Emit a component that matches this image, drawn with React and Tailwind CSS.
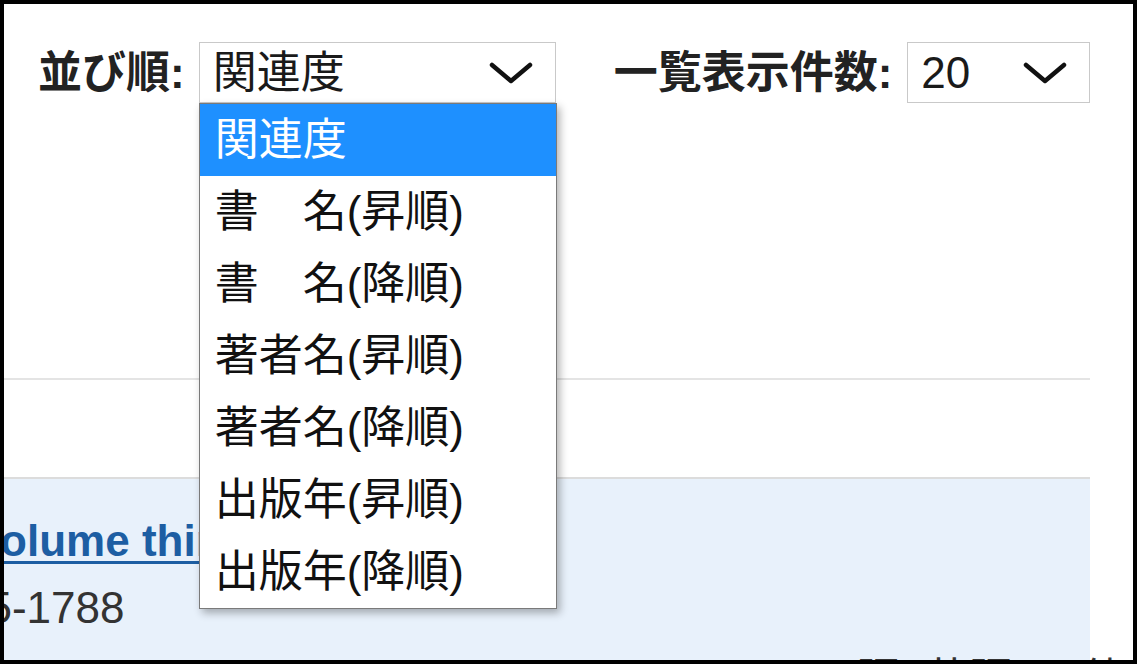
import React from 'react';

const sortOptions = [
  '関連度',
  '書　名(昇順)',
  '書　名(降順)',
  '著者名(昇順)',
  '著者名(降順)',
  '出版年(昇順)',
  '出版年(降順)',
];

const Chevron = () => (
  <svg width="44" height="24" viewBox="0 0 44 24" fill="none">
    <polyline points="3,4 22,20 41,4" stroke="#111" strokeWidth="4.5" strokeLinecap="round" strokeLinejoin="round" />
  </svg>
);

// select box that looks like the native control
const SelectBox = ({ value, width, open = false, children }) => (
  <div className={`relative shrink-0 ${width}`}>
    <div className="flex h-[61px] items-center justify-between border border-[#c9c9c9] bg-white pl-[13px] pr-[22px] text-[44px] leading-none text-[#1a1a1a]">
      <span>{value}</span>
      <Chevron />
    </div>
    {open && children}
  </div>
);

const App = () => {
  const selected = 0;

  return (
    <div className="h-[664px] w-[1137px] overflow-hidden border-[4px] border-black bg-white font-['Liberation_Sans','Noto_Sans_CJK_JP',sans-serif]">
      <div className="w-[1086px]">
        {/* Sort / page size controls */}
        <div className="flex items-center pl-[34px] pt-[38px]">
          <span className="mr-[14px] shrink-0 whitespace-nowrap text-[44px] font-bold leading-none text-[#222]">並び順:</span>
          <SelectBox value="関連度" width="w-[357px]" open>
            <ul className="absolute left-0 top-full z-10 w-[358px] border border-[#7a7a7a] bg-white shadow-[3px_4px_8px_rgba(0,0,0,0.3)]">
              {sortOptions.map((opt, i) => (
                <li
                  key={opt}
                  className={`flex h-[72px] items-center whitespace-nowrap pl-[15px] text-[44px] leading-none ${
                    i === selected ? 'bg-[#1e90ff] text-white' : 'text-[#111]'
                  }`}
                >
                  {opt}
                </li>
              ))}
            </ul>
          </SelectBox>
          <span className="ml-[58px] mr-[15px] shrink-0 whitespace-nowrap text-[44px] font-bold leading-none text-[#222]">一覧表示件数:</span>
          <SelectBox value="20" width="w-[183px]" />
        </div>

        <div className="mt-[275px] h-[2px] bg-[#e4e4e4]" />

        {/* Results */}
        <div className="mt-[97px] h-[200px] border-t-2 border-[#dcdcdc] bg-[#e8f1fb]">
          <div className="ml-[-30px] whitespace-nowrap pt-[35px] text-[44px] font-bold leading-[53px]">
            <a href="#" className="text-[#1d5ea3] underline decoration-[3px] underline-offset-[5px]">
              Volume thirteen
            </a>
          </div>
          <div className="ml-[-90px] mt-[16px] whitespace-nowrap text-[44px] leading-[50px] text-[#333]">1775-1788</div>
          <div className="mt-[22px] whitespace-nowrap pl-[808px] text-[44px] leading-[50px] text-[#333]">言語: 英語 ・ 他</div>
        </div>
      </div>
    </div>
  );
};

export default App;
